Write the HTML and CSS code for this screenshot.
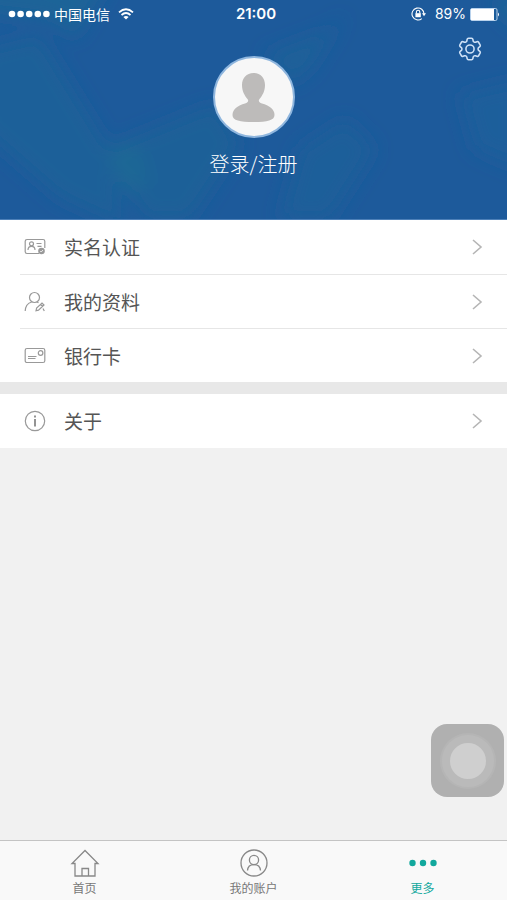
FILE: index.html
```html
<!DOCTYPE html>
<html lang="zh-CN">
<head>
    <meta charset="UTF-8">
    <meta name="viewport" content="width=device-width, initial-scale=1.0">
    <title>更多</title>
    <link rel="stylesheet" href="styles.css">
</head>
<body>
    <header class="header">
        <!-- 背景色块 -->
        <svg class="header-bg" viewBox="0 0 507 221" preserveAspectRatio="none" aria-hidden="true">
            <defs>
                <filter id="soft" x="-20%" y="-20%" width="140%" height="140%">
                    <feGaussianBlur stdDeviation="9"/>
                </filter>
            </defs>
            <g filter="url(#soft)">
                <path fill="#1b6099" d="M-20 50L40 35L110 150L125 230L60 200L-20 130Z"/>
                <path fill="#1c6498" d="M-20-20H110L75 38L50 20L-20 12Z"/>
                <path fill="#1b6198" d="M105 150L215 105L240 145L190 221H145Z"/>
                <path fill="#1a6795" d="M105 150L138 145L150 185L125 195Z"/>
                <path fill="#1b6199" d="M265 55L330 30L345 15L310 70L290 85Z"/>
                <path fill="#1c5f9a" d="M300 150L345 120L375 150L330 221H280Z"/>
                <path fill="#1c5f9b" d="M460 95L520 80V170L475 150Z"/>
                <path fill="#1b6797" d="M490 0H520V30Z"/>
            </g>
        </svg>

        <!-- 状态栏 -->
        <div class="status-bar">
            <div class="status-side">
                <svg width="42" height="8" viewBox="0 0 42 8" fill="#fff" aria-hidden="true">
                    <circle cx="4" cy="4" r="3.3"/>
                    <circle cx="12.6" cy="4" r="3.3"/>
                    <circle cx="21.2" cy="4" r="3.3"/>
                    <circle cx="29.8" cy="4" r="3.3"/>
                    <circle cx="38.4" cy="4" r="3.3"/>
                </svg>
                <span class="carrier">中国电信</span>
                <svg class="wifi" width="16" height="12" viewBox="0 0 16 12" fill="none" stroke="#fff" stroke-width="1.8" aria-hidden="true">
                    <path d="M1 4.3Q8-1.9 15 4.3"/>
                    <path d="M3.5 7Q8 3.1 12.5 7"/>
                    <path d="M8 11.6L5.4 8.9Q8 7 10.6 8.9Z" fill="#fff" stroke="none"/>
                </svg>
            </div>
            <span class="time">21:00</span>
            <div class="status-side status-right">
                <svg width="16" height="14" viewBox="0 0 16 14" fill="none" stroke="#fff" aria-hidden="true">
                    <path d="M10.8 11.6A6 6 0 1 1 13 7" stroke-width="1.1"/>
                    <path d="M11 6.3H15L13 9.2Z" fill="#fff" stroke="none"/>
                    <rect x="4.4" y="6.2" width="5.4" height="4" fill="#fff" stroke="none"/>
                    <path d="M5.4 6.4V5a1.7 1.7 0 0 1 3.4 0V6.4" stroke-width="1.1"/>
                </svg>
                <span class="percent">89%</span>
                <svg width="30" height="13" viewBox="0 0 30 13" aria-hidden="true">
                    <rect x=".5" y=".5" width="26.5" height="12" rx="1.5" fill="none" stroke="#b9d2ec"/>
                    <rect x="1" y="1" width="23" height="11" fill="#fff"/>
                    <path d="M28 4.5Q30 6.5 28 8.500Z" fill="#fff"/>
                </svg>
            </div>
        </div>

        <div class="toolbar">
            <button class="settings" type="button" aria-label="设置">
                <svg width="30" height="30" viewBox="-.5 -.5 25 25" fill="none" stroke="#cfe2f7" stroke-width="1.3">
                    <path d="M9.594 3.94c.09-.542.56-.94 1.11-.94h2.593c.55 0 1.02.398 1.11.94l.213 1.281c.063.374.313.686.645.87.074.04.147.083.22.127.325.196.72.257 1.075.124l1.217-.456a1.125 1.125 0 0 1 1.37.49l1.296 2.247a1.125 1.125 0 0 1-.26 1.431l-1.003.827c-.293.241-.438.613-.43.992a7.723 7.723 0 0 1 0 .255c-.008.378.137.75.43.991l1.004.827c.424.35.534.955.26 1.43l-1.298 2.247a1.125 1.125 0 0 1-1.369.491l-1.217-.456c-.355-.133-.75-.072-1.076.124a6.47 6.47 0 0 1-.22.128c-.331.183-.581.495-.644.869l-.213 1.281c-.09.543-.56.94-1.11.94h-2.594c-.55 0-1.019-.398-1.11-.94l-.213-1.281c-.062-.374-.312-.686-.644-.87a6.52 6.52 0 0 1-.22-.127c-.325-.196-.72-.257-1.076-.124l-1.217.456a1.125 1.125 0 0 1-1.369-.49l-1.297-2.247a1.125 1.125 0 0 1 .26-1.431l1.004-.827c.292-.24.437-.613.43-.991a6.932 6.932 0 0 1 0-.255c.007-.38-.138-.751-.43-.992l-1.004-.827a1.125 1.125 0 0 1-.26-1.43l1.297-2.247a1.125 1.125 0 0 1 1.37-.491l1.216.456c.356.133.751.072 1.076-.124.072-.044.146-.086.22-.128.332-.183.582-.495.644-.869l.214-1.28Z"/>
                    <circle cx="12" cy="12" r="3.4"/>
                </svg>
            </button>
        </div>

        <a class="profile" href="#login">
            <svg class="avatar" width="82" height="82" viewBox="0 0 82 82" aria-hidden="true">
                <circle cx="41" cy="41" r="40" fill="#f7f7f7" stroke="#8fb6de" stroke-width="2"/>
                <path fill="#bdbbba" d="M40.500 17C47.500 17 52 22 52 29C52 35 49.500 39.500 46.500 43C45 45 46 46.500 49 47.500C56 49.500 61.500 53 61.500 59C61.500 64.500 54 66 40.500 66S19.500 64.500 19.500 59C19.500 53 25 49.500 32 47.500C35 46.500 36 45 34.500 43C31.500 39.500 29 35 29 29C29 22 33.500 17 40.500 17Z"/>
            </svg>
            <span class="login">登录/注册</span>
        </a>
    </header>

    <main class="content">
        <nav class="menu">
            <a class="menu-item" href="#verify">
                <svg class="menu-icon" viewBox="0 0 22 22" aria-hidden="true">
                    <path d="M15 17.500H3a1.800 1.800 0 0 1-1.800-1.800V5.300A1.800 1.800 0 0 1 3 3.500H19a1.800 1.800 0 0 1 1.800 1.800V12"/>
                    <circle cx="7.500" cy="7.800" r="2"/>
                    <path d="M4 14C4 11.500 5.500 10.300 7.500 10.300S11 11.500 11 14M12.500 7.500H17.500M13.500 10.300H17.500"/>
                    <circle cx="17.500" cy="15" r="2.700" fill="#999"/>
                    <path d="M16.200 15L17.200 16L19 14" stroke="#fff" stroke-width=".8"/>
                </svg>
                <span class="menu-text">实名认证</span>
                <svg class="arrow" viewBox="0 0 12 18" aria-hidden="true"><path d="M2 2L10 9L2 16"/></svg>
            </a>
            <a class="menu-item" href="#info">
                <svg class="menu-icon" viewBox="0 0 22 22" aria-hidden="true">
                    <circle cx="10.500" cy="6.500" r="5"/>
                    <path d="M1.200 20C1.500 15 4 12 7.800 11M13 11L14.500 11.800"/>
                    <path d="M12 19.800L12.600 17L18 12L20 14L14.500 19.200ZM16.500 13.500L18.500 15.500M19 17.500L20.300 20"/>
                </svg>
                <span class="menu-text">我的资料</span>
                <svg class="arrow" viewBox="0 0 12 18" aria-hidden="true"><path d="M2 2L10 9L2 16"/></svg>
            </a>
            <a class="menu-item" href="#card">
                <svg class="menu-icon" viewBox="0 0 22 22" aria-hidden="true">
                    <rect x="1.200" y="3.500" width="19.600" height="14" rx="1.800"/>
                    <circle cx="16.600" cy="8" r="2.300"/>
                    <path d="M4 11.500H12.500M4 13.500H11.500"/>
                </svg>
                <span class="menu-text">银行卡</span>
                <svg class="arrow" viewBox="0 0 12 18" aria-hidden="true"><path d="M2 2L10 9L2 16"/></svg>
            </a>
        </nav>
        <nav class="menu">
            <a class="menu-item" href="#about">
                <svg class="menu-icon" viewBox="0 0 22 22" aria-hidden="true">
                    <circle cx="11" cy="11" r="9.700"/>
                    <path d="M11 9V16.500M11 5.500V7.500" stroke="#888" stroke-width="1.800"/>
                </svg>
                <span class="menu-text">关于</span>
                <svg class="arrow" viewBox="0 0 12 18" aria-hidden="true"><path d="M2 2L10 9L2 16"/></svg>
            </a>
        </nav>
    </main>

    <!-- 悬浮按钮 -->
    <button class="assistive" type="button" aria-label="辅助触控">
        <span class="assistive-ring"></span>
    </button>

    <nav class="tab-bar">
        <a class="tab" href="#home">
            <svg width="30" height="30" viewBox="0 0 30 30" aria-hidden="true">
                <path d="M5 15.500L2 15.500L15 2.500L28 15.500H25V28H5ZM12 28V20.500H18.500V28"/>
            </svg>
            <span>首页</span>
        </a>
        <a class="tab" href="#account">
            <svg width="30" height="30" viewBox="0 0 30 30" aria-hidden="true">
                <circle cx="15" cy="15" r="13"/>
                <circle cx="15" cy="12" r="4.600"/>
                <path d="M8.500 22.500C8.800 18.800 11 16.600 15 16.600S21.200 18.800 21.500 22.500"/>
            </svg>
            <span>我的账户</span>
        </a>
        <a class="tab tab-active" href="#more">
            <svg width="30" height="30" viewBox="0 0 30 30" aria-hidden="true">
                <circle cx="4.500" cy="15" r="3.200"/>
                <circle cx="15" cy="15" r="3.200"/>
                <circle cx="25.500" cy="15" r="3.200"/>
            </svg>
            <span>更多</span>
        </a>
    </nav>
</body>
</html>
```
FILE: styles.css
```css
* {
    box-sizing: border-box;
}

body {
    margin: 0;
    min-height: 100vh;
    display: flex;
    flex-direction: column;
    font-family: "Noto Sans CJK SC", sans-serif;
    background-color: #f1f1f1;
    color: #555;
}

a {
    color: inherit;
    text-decoration: none;
}

button {
    padding: 0;
    border: none;
    background: none;
    cursor: pointer;
}

svg {
    display: block;
    flex-shrink: 0;
}

/* 头部 */
.header {
    position: relative;
    padding-bottom: 41px;
    background-color: #1d5a9b;
    border-bottom: 1px solid #4d80b8;
    color: #fff;
}

.header-bg {
    position: absolute;
    top: 0;
    left: 0;
    width: 100%;
    height: 100%;
}

.status-bar,
.toolbar,
.profile {
    position: relative;
}

.status-bar {
    display: flex;
    align-items: center;
    height: 28px;
    padding: 0 7px 0 8px;
    font-size: 15px;
    line-height: 20px;
}

.status-side {
    display: flex;
    flex: 1;
    align-items: center;
    gap: 4px;
}

.status-right {
    justify-content: flex-end;
}

.carrier {
    font-size: 14px;
}

.wifi {
    margin-left: 4px;
}

.time {
    padding-left: 4px;
    font-family: Inter, sans-serif;
    font-weight: 600;
}

.percent {
    margin-left: 4px;
    font-family: Inter, sans-serif;
    font-size: 14px;
}

.toolbar {
    display: flex;
    justify-content: flex-end;
    height: 28px;
    padding: 6px 22px 0;
}

.settings {
    width: 30px;
    height: 30px;
}

.profile {
    display: flex;
    flex-direction: column;
    align-items: center;
    gap: 12px;
    font-size: 20px;
    line-height: 28px;
}

.login {
    font-weight: 300;
}

/* 菜单列表 */
.content {
    display: flex;
    flex: 1;
    flex-direction: column;
}

.menu {
    padding-left: 20px;
    background-color: #fff;
}

.menu + .menu {
    border-top: 12px solid #e8e8e8;
}

.menu-item {
    display: flex;
    align-items: center;
    height: 54px;
    padding: 0 24px 0 4px;
}

.menu-item + .menu-item {
    border-top: 1px solid #e6e6e6;
}

.menu-icon {
    width: 22px;
    height: 22px;
    fill: none;
    stroke: #999;
    stroke-width: 1.2;
}

.menu-text {
    flex: 1;
    margin-left: 18px;
    font-size: 19px;
    line-height: 28px;
}

.arrow {
    width: 12px;
    height: 18px;
    fill: none;
    stroke: #b5b5b5;
    stroke-width: 1.6;
}

/* 悬浮按钮 */
.assistive {
    position: fixed;
    right: 3px;
    bottom: 103px;
    display: flex;
    align-items: center;
    justify-content: center;
    width: 73px;
    height: 73px;
    border-radius: 16px;
    background-color: #b0b0b0;
}

.assistive-ring {
    width: 52px;
    height: 52px;
    border: 8px solid #bababa;
    border-radius: 50%;
    background-color: #cfcfcf;
    box-shadow: 0 0 0 2px #b5b5b5;
}

/* 底部导航 */
.tab-bar {
    display: flex;
    height: 60px;
    border-top: 1px solid #c4c4c4;
    background-color: #f9f9f9;
}

.tab {
    display: flex;
    flex: 1;
    flex-direction: column;
    align-items: center;
    padding-top: 7px;
    font-size: 12px;
    line-height: 20px;
    color: #777;
}

.tab svg {
    fill: none;
    stroke: #888;
    stroke-width: 1.3;
}

.tab-active {
    color: #12a89d;
}

.tab-active svg {
    fill: #12a89d;
    stroke: none;
}
```
